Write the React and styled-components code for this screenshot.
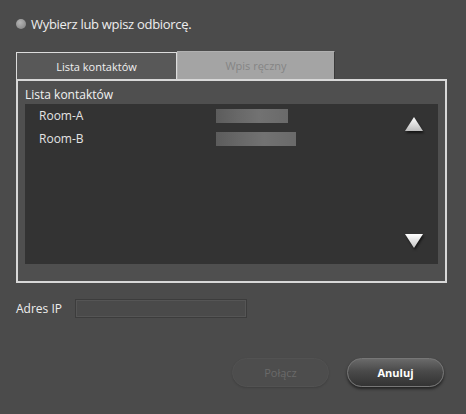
import styled, { createGlobalStyle } from "styled-components";

const GlobalStyle = createGlobalStyle`
    html, body {
        margin: 0;
        padding: 0;
        background: #4b4b4b;
    }
    body {
        font-family: "Open Sans", "Noto Sans", sans-serif;
    }
`

const contacts = [
    { name: "Room-A", blurWidth: 72 },
    { name: "Room-B", blurWidth: 80 },
]

const Dialog = styled.div`
    width: 466px;
    height: 414px;
    box-sizing: border-box;
    padding: 14px 19px 0 16px;
    background: #4b4b4b;
    display: flex;
    flex-direction: column;
    color: #e8e8e8;
`
const Prompt = styled.div`
    display: flex;
    align-items: center;
    gap: 5px;
    font-size: 13px;
    letter-spacing: -0.3px;
    height: 20px;
    color: #eeeeee;
`
const RadioDot = styled.span`
    width: 10px;
    height: 10px;
    border-radius: 50%;
    background: radial-gradient(circle at 40% 35%, #b5b5b5, #7d7d7d);
`
const Tabs = styled.div`
    display: flex;
    margin-top: 17px;
    height: 28px;
    align-items: flex-end;
`
const Tab = styled.div`
    box-sizing: border-box;
    width: ${p => p.$width}px;
    height: ${p => p.$active ? 27 : 28}px;
    display: flex;
    align-items: center;
    justify-content: center;
    font-size: 11px;
    background: ${p => p.$active ? "#585858" : "#a4a4a4"};
    color: ${p => p.$active ? "#f0f0f0" : "#848484"};
    border: 1px solid ${p => p.$active ? "#dcdcdc" : "#b0b0b0"};
    border-bottom: none;
    border-right-color: ${p => p.$active ? "#dcdcdc" : "#3a3a3a"};
`
const Panel = styled.div`
    box-sizing: border-box;
    width: 431px;
    height: 204px;
    border: 2px solid #d8d8d8;
    background: #4f4f4f;
    padding: 6px 7px 17px 7px;
    display: flex;
    flex-direction: column;
`
const PanelTitle = styled.div`
    font-size: 12px;
    line-height: 15px;
    color: #f2f2f2;
`
const ListBox = styled.div`
    flex: 1;
    margin-top: 2px;
    background: #333333;
    display: flex;
    justify-content: space-between;
    padding: 0 14px 15px 14px;
`
const Rows = styled.div`
    display: flex;
    flex-direction: column;
`
const Row = styled.div`
    display: flex;
    align-items: center;
    height: 23px;
    font-size: 12px;
    color: #e4e4e4;
`
const RowName = styled.span`
    width: 177px;
`
const Blurred = styled.span`
    width: ${p => p.$width}px;
    height: 14px;
    background: linear-gradient(90deg, #5c5c5c 0%, #686868 30%, #727272 60%, #6a6a6a 100%);
    filter: blur(0.6px);
`
const Scroller = styled.div`
    display: flex;
    flex-direction: column;
    justify-content: space-between;
    padding-top: 12px;
`
const Arrow = styled.svg`
    width: 20px;
    height: 16px;
    filter: drop-shadow(1px 2px 1px rgba(0, 0, 0, 0.6));
`
const IpRow = styled.div`
    display: flex;
    align-items: center;
    gap: 13px;
    margin-top: 16px;
    font-size: 12px;
    color: #eeeeee;
`
const IpInput = styled.div`
    box-sizing: border-box;
    width: 172px;
    height: 19px;
    border: 1px solid #3c3c3c;
    box-shadow: inset 0 0 0 1px #555;
    background: #4a4a4a;
`
const Buttons = styled.div`
    display: flex;
    justify-content: flex-end;
    gap: 18px;
    margin-top: 40px;
    padding-right: 3px;
`
const Button = styled.div`
    box-sizing: border-box;
    width: 97px;
    height: 29px;
    border-radius: 15px;
    display: flex;
    align-items: center;
    justify-content: center;
    font-size: 11px;
    font-weight: ${p => p.$disabled ? 400 : 700};
    color: ${p => p.$disabled ? "#6a6a6a" : "#ffffff"};
    background: ${p => p.$disabled
        ? "#4d4d4d"
        : "linear-gradient(180deg, #6a6a6a 0%, #4a4a4a 45%, #333333 100%)"};
    border: 1px solid ${p => p.$disabled ? "#525252" : "#777777"};
    box-shadow: ${p => p.$disabled
        ? "0 1px 2px rgba(0,0,0,0.15)"
        : "0 2px 3px rgba(0,0,0,0.55)"};
`

const UpArrow = () => (
    <Arrow viewBox="0 0 20 16">
        <defs>
            <linearGradient id="arrowUp" x1="0" y1="0" x2="0" y2="1">
                <stop offset="0" stopColor="#ffffff" />
                <stop offset="1" stopColor="#bdbdbd" />
            </linearGradient>
        </defs>
        <polygon points="10,1 19,15 1,15" fill="url(#arrowUp)" />
    </Arrow>
)

const DownArrow = () => (
    <Arrow viewBox="0 0 20 16">
        <defs>
            <linearGradient id="arrowDown" x1="0" y1="0" x2="0" y2="1">
                <stop offset="0" stopColor="#ffffff" />
                <stop offset="1" stopColor="#c4c4c4" />
            </linearGradient>
        </defs>
        <polygon points="1,1 19,1 10,15" fill="url(#arrowDown)" />
    </Arrow>
)

const App = () => {
    return (
        <>
            <GlobalStyle />
            <Dialog>
                <Prompt>
                    <RadioDot />
                    Wybierz lub wpisz odbiorcę.
                </Prompt>
                <Tabs>
                    <Tab $active $width={161}>Lista kontaktów</Tab>
                    <Tab $width={158}>Wpis ręczny</Tab>
                </Tabs>
                <Panel>
                    <PanelTitle>Lista kontaktów</PanelTitle>
                    <ListBox>
                        <Rows>
                            {contacts.map(c => (
                                <Row key={c.name}>
                                    <RowName>{c.name}</RowName>
                                    <Blurred $width={c.blurWidth} />
                                </Row>
                            ))}
                        </Rows>
                        <Scroller>
                            <UpArrow />
                            <DownArrow />
                        </Scroller>
                    </ListBox>
                </Panel>
                <IpRow>
                    Adres IP
                    <IpInput />
                </IpRow>
                <Buttons>
                    <Button $disabled>Połącz</Button>
                    <Button>Anuluj</Button>
                </Buttons>
            </Dialog>
        </>
    )
}

export default App;
